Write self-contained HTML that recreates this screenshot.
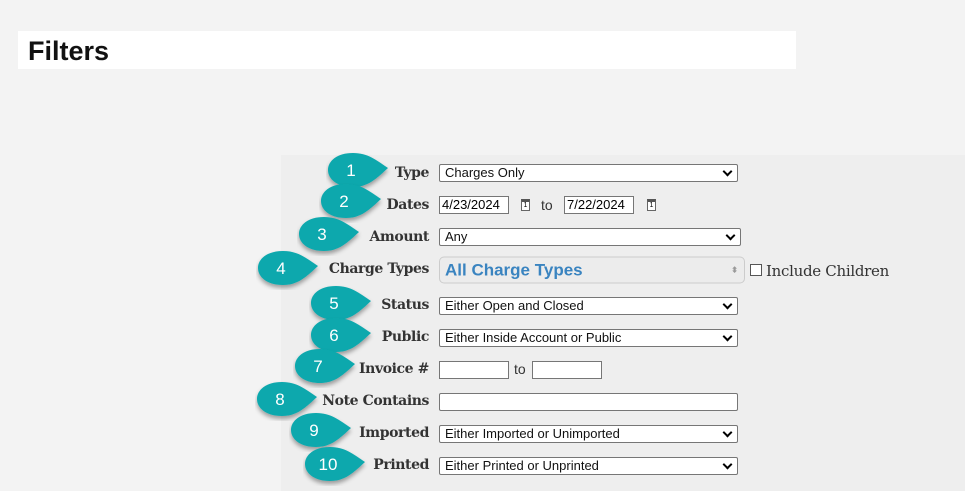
<!DOCTYPE html>
<html><head><meta charset="utf-8"><style>
body{margin:0;width:965px;height:491px;background:#f3f3f3;position:relative;overflow:hidden;font-family:"Liberation Sans",sans-serif}
.hdr{position:absolute;left:18px;top:31px;width:778px;height:38px;background:#fff}
.hdr h1{margin:0;position:absolute;left:10px;top:5px;font-size:27px;font-weight:bold;color:#111}
.panel{position:absolute;left:281px;top:155px;width:684px;height:336px;background:#eeeeee}
.lbl{position:absolute;right:536px;font-family:"DejaVu Serif",serif;font-weight:bold;font-size:14px;letter-spacing:-0.4px;color:#333;transform:translateY(-50%)}
.sel{position:absolute;left:439px;width:299px;height:18px;background:#fff;border:1px solid #767676;border-radius:2px;font-size:13px;line-height:16px;padding-left:5px;box-sizing:border-box;color:#111;transform:translateY(-50%)}
.sel::after{content:"";position:absolute;right:6px;top:3px;width:5px;height:5px;border-right:2px solid #000;border-bottom:2px solid #000;transform:rotate(45deg)}
.sel.nc::after{display:none}
.inp{position:absolute;height:18px;background:#fff;border:1px solid #767676;box-sizing:border-box;font-size:13px;line-height:16px;padding-left:2px;transform:translateY(-50%)}
.t{position:absolute;font-size:14px;color:#333;transform:translateY(-50%)}
.call{position:absolute;width:66px;height:40px;transform:translateY(-50%)}
.call span{position:absolute;left:12px;width:26px;top:9px;text-align:center;color:#fff;font-size:17px}
.cal{position:absolute;width:9px;height:12px;border:1px solid #666;border-top:3px solid #555;background:#fff;box-sizing:border-box;transform:translateY(-50%);font-size:7px;text-align:center;line-height:8px}
</style></head><body>
<div class="hdr"><h1>Filters</h1></div>
<div class="panel"></div>
<svg width="0" height="0" style="position:absolute"><defs><filter id="sh" x="-20%" y="-20%" width="150%" height="160%"><feDropShadow dx="0" dy="3" stdDeviation="2" flood-color="#000" flood-opacity=".35"/></filter>
<path id="td" d="M62,16 C50,8 42,1 27,1 C11,1 2,9 2,18 C2,27 11,35 27,35 C42,35 50,27 62,16 Z"/></defs></svg>

<div class="lbl" style="top:173px">Type</div><div class="sel" style="top:173px">Charges Only</div>
<div class="lbl" style="top:205px">Dates</div>
<div class="inp" style="left:439px;top:205px;width:70px">4/23/2024</div>
<div class="cal" style="left:521px;top:205px">1</div>
<div class="t" style="left:541px;top:205px">to</div>
<div class="inp" style="left:564px;top:205px;width:70px">7/22/2024</div>
<div class="cal" style="left:647px;top:205px">1</div>
<div class="lbl" style="top:237px">Amount</div><div class="sel" style="top:237px;width:302px">Any</div>
<div class="lbl" style="top:269px">Charge Types</div>
<div class="sel nc" style="top:270px;width:306px;height:27px;border:1px solid #ccc;border-radius:5px;background:#ececec;color:#3a84c0;font-size:17px;font-weight:bold;line-height:25px">All Charge Types<span style="position:absolute;right:6px;top:0;font-size:8px;color:#999">⬍</span></div>
<div style="position:absolute;left:750px;top:264px;width:12px;height:12px;border:1px solid #555;background:#fff;box-sizing:border-box"></div>
<div class="t" style="left:766px;top:271px;font-family:'DejaVu Serif',serif;font-size:15px;letter-spacing:-0.3px">Include Children</div>
<div class="lbl" style="top:305px">Status</div><div class="sel" style="top:306px">Either Open and Closed</div>
<div class="lbl" style="top:337px">Public</div><div class="sel" style="top:338px">Either Inside Account or Public</div>
<div class="lbl" style="top:369px">Invoice #</div>
<div class="inp" style="left:439px;top:370px;width:70px"></div>
<div class="t" style="left:514px;top:369px">to</div>
<div class="inp" style="left:532px;top:370px;width:70px"></div>
<div class="lbl" style="top:401px">Note Contains</div><div class="sel nc" style="top:402px"></div>
<div class="lbl" style="top:433px">Imported</div><div class="sel" style="top:434px">Either Imported or Unimported</div>
<div class="lbl" style="top:465px">Printed</div><div class="sel" style="top:466px">Either Printed or Unprinted</div>

<svg class="call" style="left:326px;top:172px"><use href="#td" fill="#0aa8ad" filter="url(#sh)"/></svg><div class="call" style="left:326px;top:172px"><span>1</span></div>
<svg class="call" style="left:319px;top:203px"><use href="#td" fill="#0aa8ad" filter="url(#sh)"/></svg><div class="call" style="left:319px;top:203px"><span>2</span></div>
<svg class="call" style="left:297px;top:236px"><use href="#td" fill="#0aa8ad" filter="url(#sh)"/></svg><div class="call" style="left:297px;top:236px"><span>3</span></div>
<svg class="call" style="left:256px;top:270px"><use href="#td" fill="#0aa8ad" filter="url(#sh)"/></svg><div class="call" style="left:256px;top:270px"><span>4</span></div>
<svg class="call" style="left:309px;top:305px"><use href="#td" fill="#0aa8ad" filter="url(#sh)"/></svg><div class="call" style="left:309px;top:305px"><span>5</span></div>
<svg class="call" style="left:309px;top:337px"><use href="#td" fill="#0aa8ad" filter="url(#sh)"/></svg><div class="call" style="left:309px;top:337px"><span>6</span></div>
<svg class="call" style="left:293px;top:368px"><use href="#td" fill="#0aa8ad" filter="url(#sh)"/></svg><div class="call" style="left:293px;top:368px"><span>7</span></div>
<svg class="call" style="left:255px;top:401px"><use href="#td" fill="#0aa8ad" filter="url(#sh)"/></svg><div class="call" style="left:255px;top:401px"><span>8</span></div>
<svg class="call" style="left:289px;top:432px"><use href="#td" fill="#0aa8ad" filter="url(#sh)"/></svg><div class="call" style="left:289px;top:432px"><span>9</span></div>
<svg class="call" style="left:303px;top:466px"><use href="#td" fill="#0aa8ad" filter="url(#sh)"/></svg><div class="call" style="left:303px;top:466px"><span>10</span></div>
</body></html>
